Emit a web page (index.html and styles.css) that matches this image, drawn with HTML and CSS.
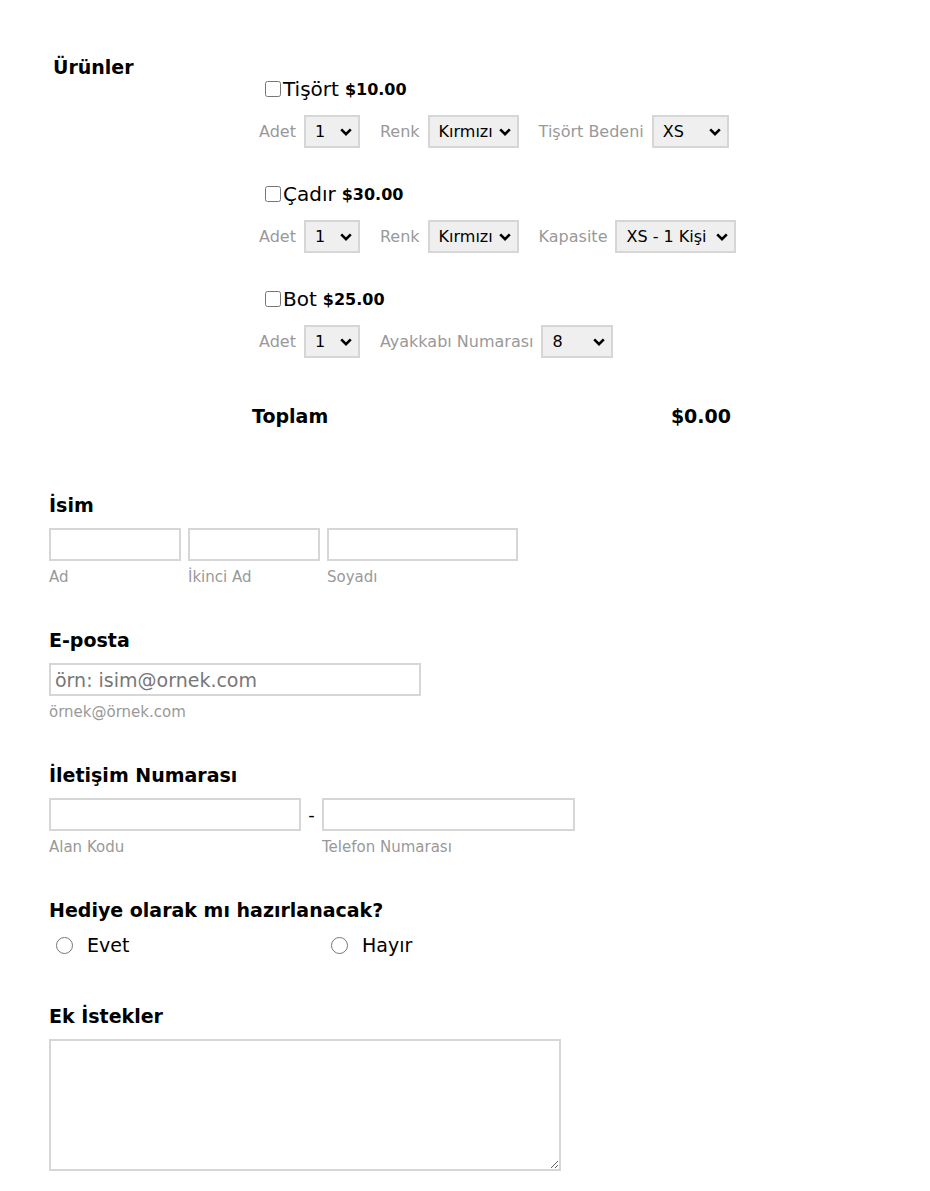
FILE: index.html
```html
<!DOCTYPE html>
<html>
  <head>
    <title>Sipariş Formu</title>
    <link rel="stylesheet" href="styles.css">
  </head>
  <body>
    <form class="order-form">
      <section class="products">
        <div class="products-label">Ürünler</div>
        <div class="product-list">
          <div class="product">
            <label class="product-title"><input type="checkbox">Tişört <b class="price">$10.00</b></label>
            <div class="product-options">
              <span class="opt-label">Adet</span>
              <select class="sel-qty"><option>1</option><option>2</option><option>3</option></select>
              <span class="opt-label">Renk</span>
              <select class="sel-color"><option>Kırmızı</option><option>Mavi</option></select>
              <span class="opt-label">Tişört Bedeni</span>
              <select class="sel-size"><option>XS</option><option>S</option><option>M</option></select>
            </div>
          </div>
          <div class="product">
            <label class="product-title"><input type="checkbox">Çadır <b class="price">$30.00</b></label>
            <div class="product-options">
              <span class="opt-label">Adet</span>
              <select class="sel-qty"><option>1</option><option>2</option><option>3</option></select>
              <span class="opt-label">Renk</span>
              <select class="sel-color"><option>Kırmızı</option><option>Mavi</option></select>
              <span class="opt-label">Kapasite</span>
              <select class="sel-cap"><option>XS - 1 Kişi</option><option>S - 2 Kişi</option></select>
            </div>
          </div>
          <div class="product">
            <label class="product-title"><input type="checkbox">Bot <b class="price">$25.00</b></label>
            <div class="product-options">
              <span class="opt-label">Adet</span>
              <select class="sel-qty"><option>1</option><option>2</option><option>3</option></select>
              <span class="opt-label">Ayakkabı Numarası</span>
              <select class="sel-shoe"><option>8</option><option>9</option><option>10</option></select>
            </div>
          </div>
        </div>
      </section>
      <div class="total-row">
        <span>Toplam</span>
        <span>$0.00</span>
      </div>

      <div class="field">
        <div class="field-label">İsim</div>
        <div class="input-row">
          <div class="sub"><input type="text" class="in-first"><span class="sub-label">Ad</span></div>
          <div class="sub"><input type="text" class="in-middle"><span class="sub-label">İkinci Ad</span></div>
          <div class="sub"><input type="text" class="in-last"><span class="sub-label">Soyadı</span></div>
        </div>
      </div>

      <div class="field">
        <div class="field-label">E-posta</div>
        <div class="sub"><input type="email" class="in-email" placeholder="örn: isim@ornek.com"><span class="sub-label">örnek@örnek.com</span></div>
      </div>

      <div class="field">
        <div class="field-label">İletişim Numarası</div>
        <div class="input-row phone-row">
          <div class="sub"><input type="tel" class="in-area"><span class="sub-label">Alan Kodu</span></div>
          <span class="dash">-</span>
          <div class="sub"><input type="tel" class="in-phone"><span class="sub-label">Telefon Numarası</span></div>
        </div>
      </div>

      <div class="field">
        <div class="field-label">Hediye olarak mı hazırlanacak?</div>
        <div class="radio-row">
          <label class="radio"><input type="radio" name="gift">Evet</label>
          <label class="radio"><input type="radio" name="gift">Hayır</label>
        </div>
      </div>

      <div class="field notes-field">
        <div class="field-label">Ek İstekler</div>
        <textarea class="notes"></textarea>
      </div>
    </form>
  </body>
</html>
```

FILE: styles.css
```css
body {
  margin: 0;
  font-family: "DejaVu Sans", Verdana, sans-serif;
  color: #000;
  background: #fff;
}
.order-form {
  padding: 56px 0 40px 49px;
}
.products {
  display: flex;
}
.products-label {
  width: 206px;
  padding-left: 4px;
  font-size: 19px;
  font-weight: bold;
  line-height: 23px;
}
.product-list {
  padding-top: 22px;
}
.product + .product {
  margin-top: 35px;
}
.product-title {
  display: flex;
  align-items: center;
  height: 22px;
  padding-left: 6px;
  font-size: 20px;
}
.product-title input {
  width: 16px;
  height: 16px;
  margin: 0 2px 0 0;
}
.price {
  margin-left: 6px;
  font-size: 16px;
}
.product-options {
  display: flex;
  align-items: center;
  height: 33px;
  margin-top: 15px;
}
.opt-label {
  font-size: 16px;
  color: #999;
  margin-right: 8px;
}
select {
  appearance: none;
  -webkit-appearance: none;
  height: 33px;
  margin: 0 20px 0 0;
  padding: 0 20px 0 9px;
  font-family: "DejaVu Sans", Verdana, sans-serif;
  font-size: 16px;
  color: #000;
  background: #efefef url("data:image/svg+xml,%3Csvg xmlns='http://www.w3.org/2000/svg' width='12' height='8' viewBox='0 0 12 8'%3E%3Cpath d='M1.2 1.3 6 6.1l4.8-4.8' fill='none' stroke='%23000' stroke-width='2.6'/%3E%3C/svg%3E") no-repeat right 6px center;
  border: 2px solid #d6d6d6;
  border-radius: 0;
  box-sizing: border-box;
}
.sel-qty { width: 56px; }
.sel-color { width: 91px; }
.sel-size { width: 77px; }
.sel-cap { width: 121px; }
.sel-shoe { width: 72px; }

.total-row {
  display: flex;
  justify-content: space-between;
  width: 479px;
  margin: 47px 0 0 203px;
  font-size: 19px;
  font-weight: bold;
  line-height: 23px;
}

.field {
  margin-top: 43px;
}
.total-row + .field {
  margin-top: 66px;
}
.notes-field {
  margin-top: 48px;
}
.field-label {
  font-size: 19px;
  font-weight: bold;
  line-height: 23px;
  margin-bottom: 11px;
}
.input-row {
  display: flex;
  gap: 7px;
}
.sub {
  display: flex;
  flex-direction: column;
}
input[type="text"],
input[type="email"],
input[type="tel"] {
  height: 33px;
  padding: 0 4px;
  font-family: "DejaVu Sans", Verdana, sans-serif;
  font-size: 19px;
  border: 2px solid #d6d6d6;
  border-radius: 0;
  box-sizing: border-box;
  margin: 0;
}
input::placeholder {
  color: #777;
}
.sub-label {
  margin-top: 8px;
  font-size: 15px;
  line-height: 17px;
  color: #999;
}
.in-first,
.in-middle { width: 132px; }
.in-last { width: 191px; }
.in-email { width: 372px; }
.in-area { width: 252px; }
.in-phone { width: 253px; }
.phone-row {
  gap: 0;
}
.dash {
  width: 21px;
  height: 33px;
  line-height: 33px;
  text-align: center;
  font-size: 18px;
}

.radio-row {
  display: flex;
  margin-top: 11px;
}
.radio {
  display: flex;
  align-items: center;
  width: 275px;
  height: 24px;
  font-size: 19px;
}
.radio input {
  width: 17px;
  height: 17px;
  margin: 0 14px 0 7px;
}
.notes {
  display: block;
  width: 512px;
  height: 132px;
  margin: 0;
  border: 2px solid #d6d6d6;
  box-sizing: border-box;
  font-family: "DejaVu Sans", Verdana, sans-serif;
}
```
